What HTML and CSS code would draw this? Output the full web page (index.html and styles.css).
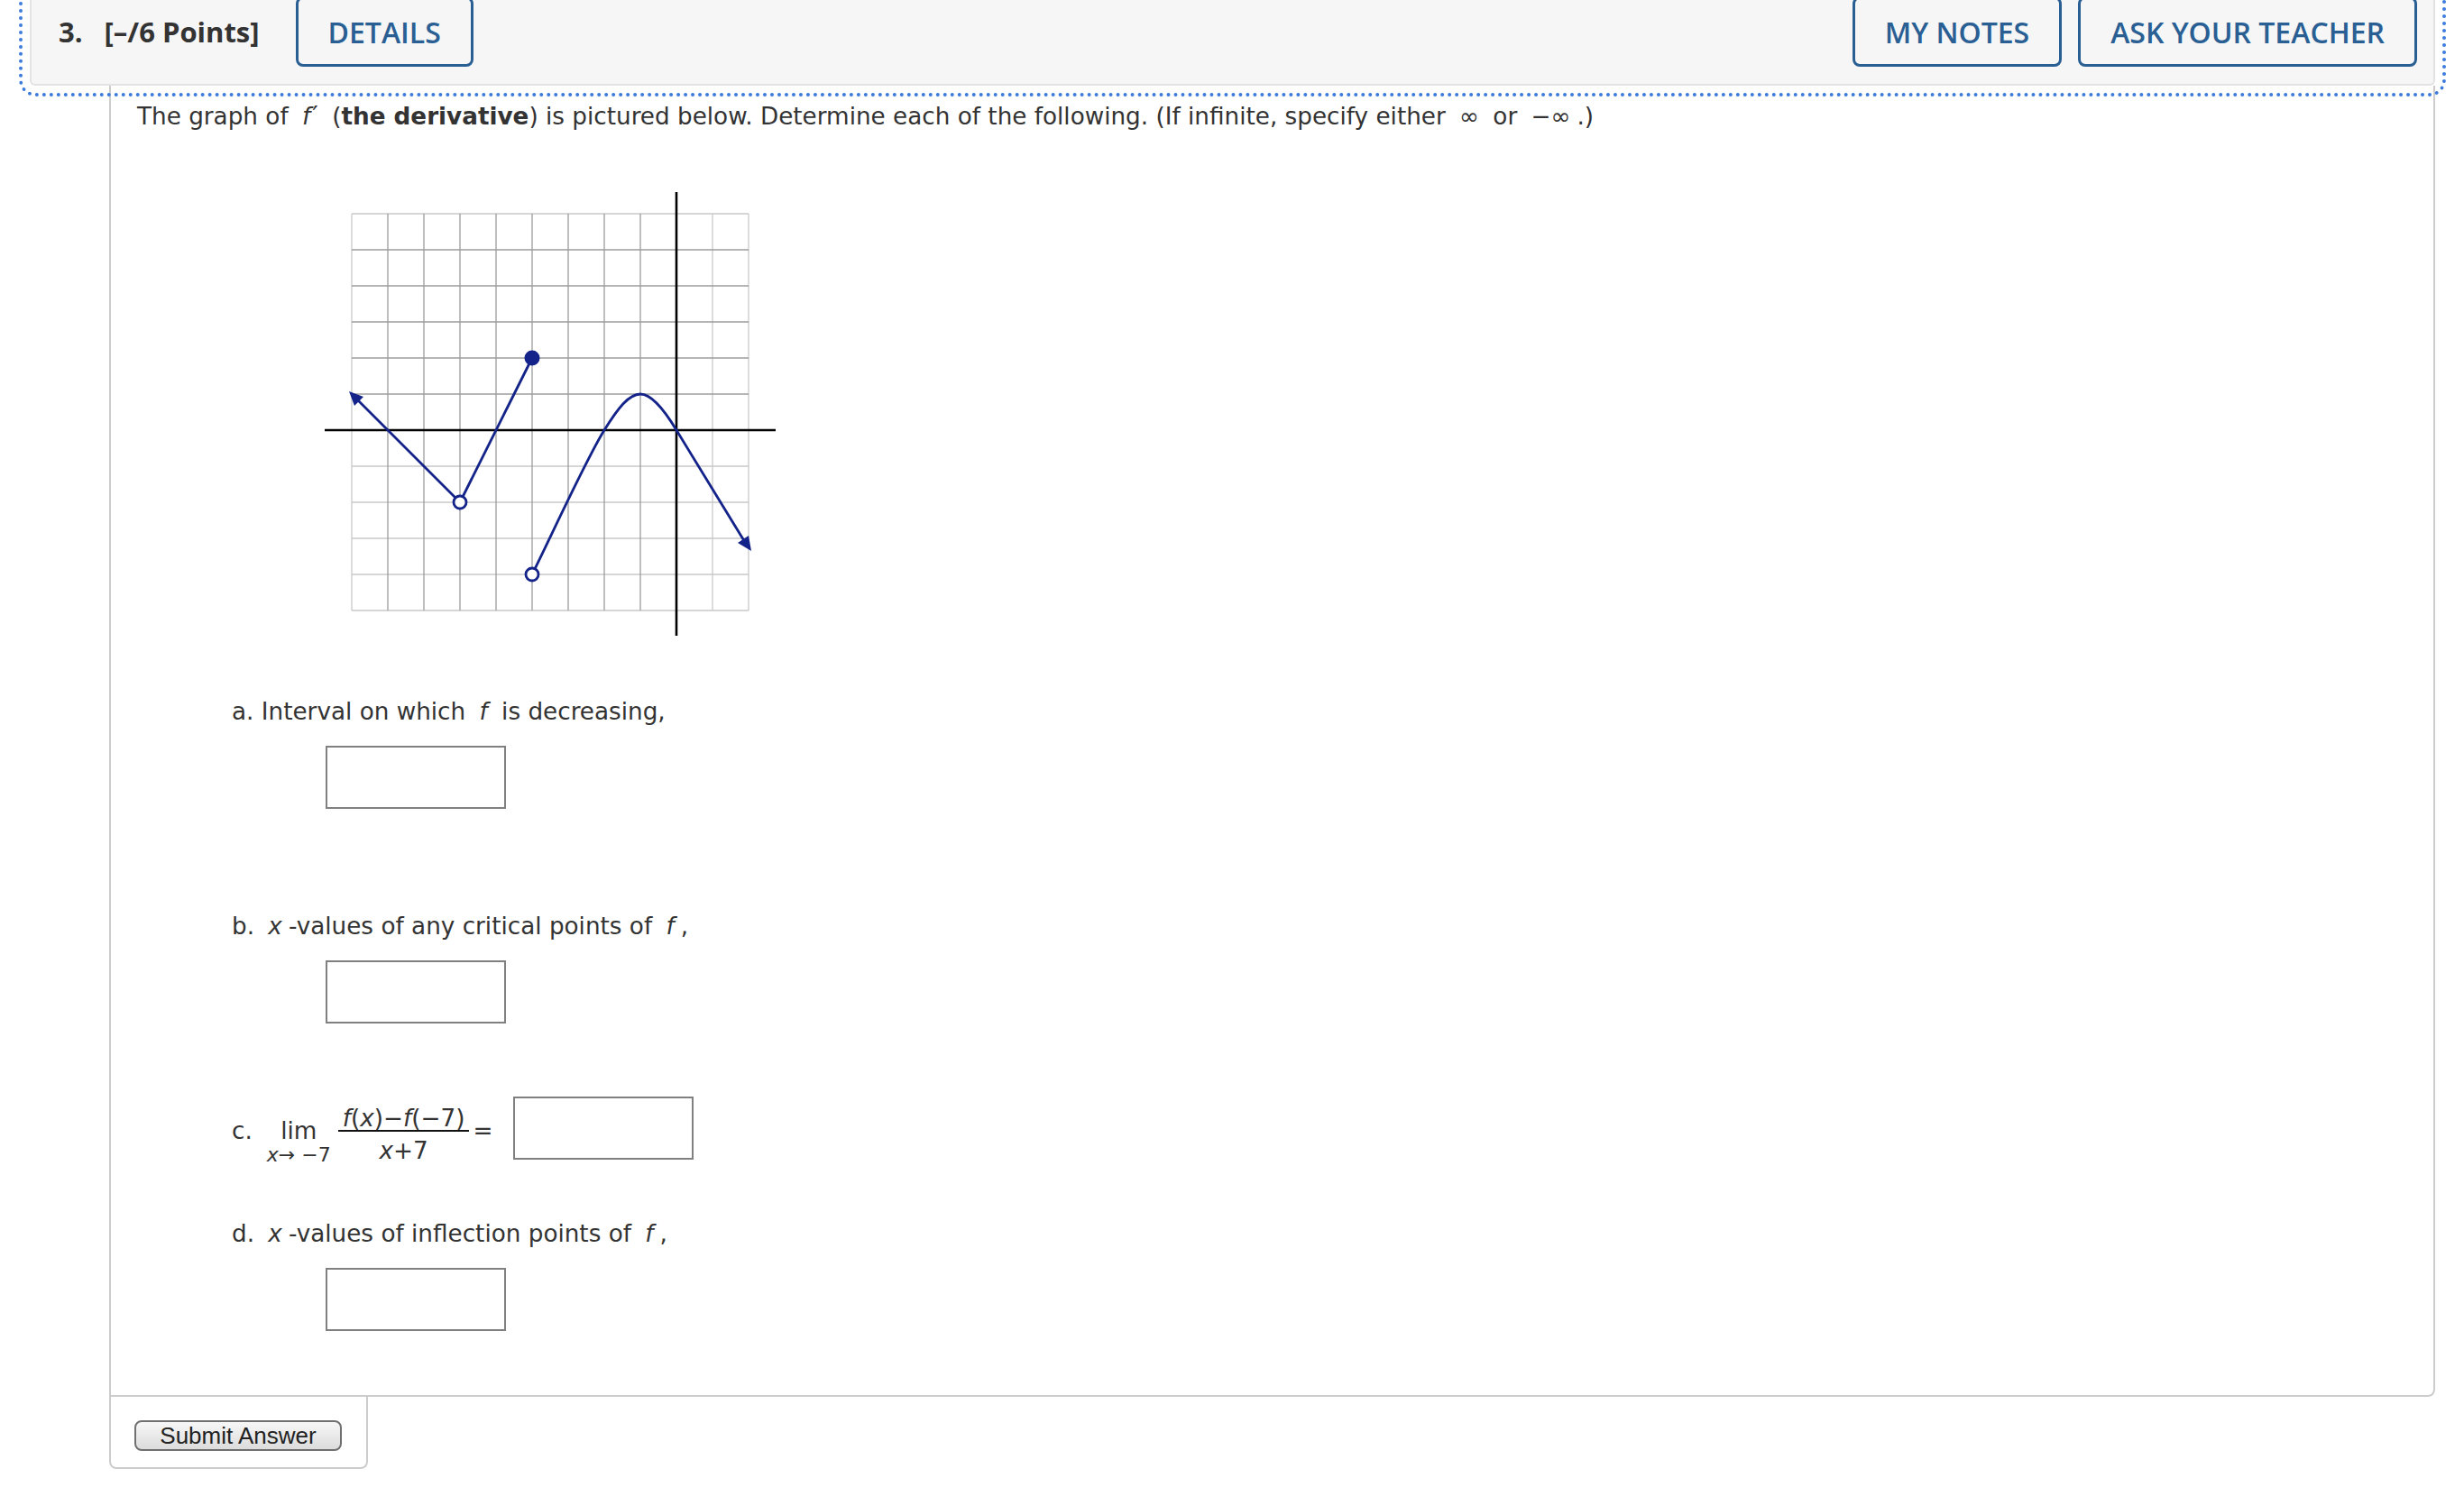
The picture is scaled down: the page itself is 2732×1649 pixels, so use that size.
FILE: index.html
```html
<!DOCTYPE html>
<html lang="en">
<head>
<meta charset="utf-8">
<title>Question 3</title>
<link rel="stylesheet" href="styles.css">
</head>
<body>
<div class="page">
  <div class="question">
    <div class="q-header">
      <div class="q-title"><span class="q-num">3.</span><span class="q-points">[–/6 Points]</span></div>
      <button class="hbtn details">DETAILS</button>
      <div class="spacer"></div>
      <button class="hbtn notes">MY NOTES</button>
      <button class="hbtn">ASK YOUR TEACHER</button>
    </div>
    <div class="q-body">
      <p class="prompt">The graph of <span class="m"><i>f</i><span class="prime">′</span></span> (<b>the derivative</b>) is pictured below. Determine each of the following. (If infinite, specify either <span class="m">∞</span> or <span class="m">−∞</span>.)</p>
      <svg class="graph" width="500" height="492" viewBox="0 0 500 492">
        <g stroke="#c9c9c9" stroke-width="1.3">
          <line x1="30" y1="304" x2="470" y2="304"/>
          <line x1="30" y1="344" x2="470" y2="344"/>
          <line x1="30" y1="384" x2="470" y2="384"/>
          <line x1="30" y1="424" x2="470" y2="424"/>
          <line x1="30" y1="464" x2="470" y2="464"/>
          <line x1="30" y1="24" x2="30" y2="464"/>
          <line x1="430" y1="24" x2="430" y2="464"/>
          <line x1="470" y1="24" x2="470" y2="464"/>
          <line x1="30" y1="24" x2="470" y2="24"/>
        </g>
        <g stroke="#9c9c9c" stroke-width="1.3">
          <line x1="30" y1="64" x2="470" y2="64"/>
          <line x1="30" y1="104" x2="470" y2="104"/>
          <line x1="30" y1="144" x2="470" y2="144"/>
          <line x1="30" y1="184" x2="470" y2="184"/>
          <line x1="30" y1="224" x2="470" y2="224"/>
          <line x1="70" y1="24" x2="70" y2="464"/>
          <line x1="110" y1="24" x2="110" y2="464"/>
          <line x1="150" y1="24" x2="150" y2="464"/>
          <line x1="190" y1="24" x2="190" y2="464"/>
          <line x1="230" y1="24" x2="230" y2="464"/>
          <line x1="270" y1="24" x2="270" y2="464"/>
          <line x1="310" y1="24" x2="310" y2="464"/>
          <line x1="350" y1="24" x2="350" y2="464"/>
        </g>
        <g stroke="#000" stroke-width="2.6">
          <line x1="0" y1="264" x2="500" y2="264"/>
          <line x1="390" y1="0" x2="390" y2="492"/>
        </g>
        <g stroke="#13238a" stroke-width="2.8" fill="none" stroke-linecap="round">
          <line x1="37" y1="231" x2="150" y2="344"/>
          <line x1="150" y1="344" x2="230" y2="184"/>
          <path d="M230,424 C250,384 290,296 310,264 C325,240 337,224 350,224 C363,224 378,244 390,264 L464,385"/>
        </g>
        <g fill="#13238a">
          <polygon points="27,221 43,227 33,237"/>
          <polygon points="473,398 470,381 458,389"/>
          <circle cx="230" cy="184" r="8.5"/>
        </g>
        <g fill="#fff" stroke="#13238a" stroke-width="2.8">
          <circle cx="150" cy="344" r="7"/>
          <circle cx="230" cy="424" r="7"/>
        </g>
      </svg>

      <div class="part part-a">a. Interval on which <span class="m"><i>f</i></span> is decreasing,</div>
      <div class="answer"></div>

      <div class="part part-b">b. <span class="m"><i>x</i></span>-values of any critical points of <span class="m"><i>f</i></span>,</div>
      <div class="answer"></div>

      <div class="limrow">
        <span class="lbl">c.</span>
        <span class="lim"><span class="lim-word">lim</span><span class="lim-sub"><i>x</i>→ −7</span></span>
        <span class="frac"><span class="num"><i>f</i>(<i>x</i>)−<i>f</i>(−7)</span><span class="den"><i>x</i>+7</span></span>
        <span class="eq">=</span>
        <div class="answer inline"></div>
      </div>

      <div class="part part-d">d. <span class="m"><i>x</i></span>-values of inflection points of <span class="m"><i>f</i></span>,</div>
      <div class="answer"></div>
    </div>
    <div class="q-submit">
      <button class="submit">Submit Answer</button>
    </div>
  </div>
</div>
</body>
</html>
```
FILE: styles.css
```css
html, body {
  margin: 0;
  padding: 0;
  background: #fff;
}

body {
  font-family: "DejaVu Sans", Verdana, sans-serif;
  color: #333;
  font-size: 26.25px;
}

.page {
  margin-top: -10px;
  padding: 0 32px 0 33px;
}

.q-header {
  display: flex;
  align-items: center;
  background: #f6f6f6;
  border: 2px solid #e3e3e3;
  border-top: none;
  border-radius: 0 0 6px 6px;
  padding: 6px 18px 19px 30px;
  outline: 4px dotted #3a7bdb;
  outline-offset: 8px;
}

.q-title {
  font-family: "Open Sans", sans-serif;
  font-weight: 700;
  font-size: 31px;
  color: #333;
}

.q-num {
  margin-right: 24px;
}

.hbtn {
  height: 78px;
  padding: 0 33px;
  border: 3px solid #2a5f94;
  border-radius: 8px;
  background: transparent;
  color: #2a5f94;
  font-family: "Open Sans", sans-serif;
  font-weight: 600;
  font-size: 32px;
  cursor: pointer;
}

.details {
  margin-left: 40px;
}

.spacer {
  flex: 1;
}

.notes {
  margin-right: 18px;
}

.q-body {
  margin-left: 88px;
  border: 2px solid #cccccc;
  border-top: none;
  border-radius: 0 0 8px 0;
  padding: 15px 0 71px 29px;
}

.prompt {
  margin: 0;
  line-height: 36px;
}

.m {
  margin: 0 7px;
}

.prime {
  font-family: "DejaVu Sans", sans-serif;
  font-size: 1.1em;
  margin-left: 2px;
}

.graph {
  display: block;
  margin: 66px 0 0 208px;
}

.part {
  margin-left: 105px;
  line-height: 36px;
}

.part-a {
  margin-top: 66px;
}

.part-b {
  margin-top: 112px;
}

.part-d {
  margin-top: 64px;
}

.answer {
  width: 196px;
  height: 66px;
  border: 2px solid #808080;
  margin: 20px 0 0 209px;
  background: #fff;
}

.answer.inline {
  margin: 0 0 0 23px;
}

.limrow {
  display: flex;
  align-items: center;
  height: 70px;
  margin: 81px 0 0 105px;
}

.lbl {
  margin-top: 6px;
}

.lim {
  display: inline-flex;
  flex-direction: column;
  align-items: center;
  margin: 30px 0 0 16px;
}

.lim-word {
  line-height: 30px;
}

.lim-sub {
  font-size: 22px;
  line-height: 24px;
  white-space: nowrap;
}

.frac {
  display: inline-flex;
  flex-direction: column;
  align-items: stretch;
  margin: 14px 0 0 8px;
  text-align: center;
}

.num {
  line-height: 26px;
  padding: 0 5px;
  border-bottom: 2px solid #111;
}

.den {
  line-height: 26px;
  padding-top: 8px;
}

.eq {
  margin: 6px 0 0 4px;
}

.q-submit {
  margin-left: 88px;
  width: 287px;
  border: 2px solid #cccccc;
  border-top: none;
  border-radius: 0 0 8px 8px;
  padding: 26px 0 18px 26px;
  box-sizing: border-box;
}

.submit {
  display: block;
  width: 230px;
  height: 34px;
  padding: 0;
  border: 2px solid #707070;
  border-radius: 8px;
  background: linear-gradient(#f7f7f7, #dcdcdc);
  color: #222;
  font-family: "Liberation Sans", Arial, sans-serif;
  font-size: 26px;
  line-height: 30px;
}
```
